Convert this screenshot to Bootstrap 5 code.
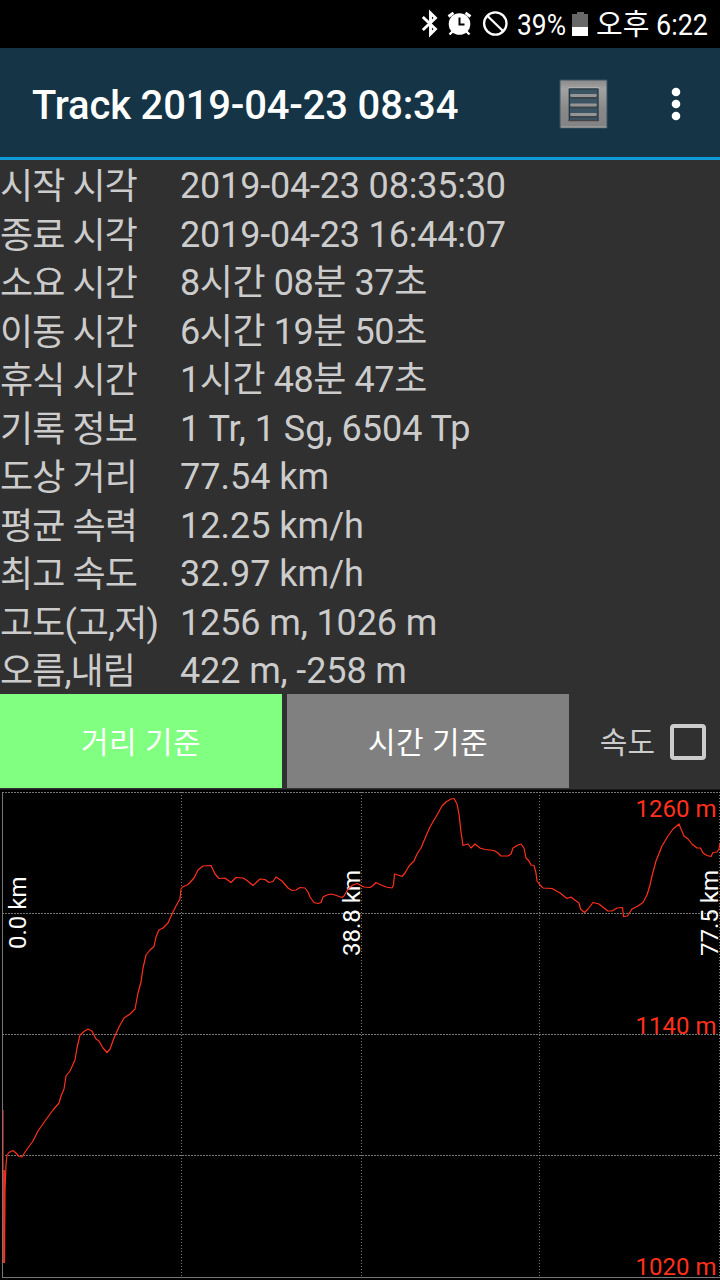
<!DOCTYPE html>
<html lang="ko">
<head>
<meta charset="utf-8">
<meta name="viewport" content="width=device-width, initial-scale=1">
<title>Track 2019-04-23 08:34</title>
<link href="https://cdn.jsdelivr.net/npm/bootstrap@5.3.0/dist/css/bootstrap.min.css" rel="stylesheet">
<style>
body{background:#000;font-family:Roboto,"Noto Sans CJK KR",sans-serif;color:#ccc;width:720px;height:1280px;overflow:hidden}
svg{display:block;flex:none}
svg text{font-family:Roboto,"Noto Sans CJK KR",sans-serif}
.status{height:48px;background:#000}
.appbar{height:112px;background:#153446;border-bottom:3px solid #0f9bd7;padding:2px 32px 0 32px}
.appbar h1{font-size:40px;font-weight:500;color:#fff;letter-spacing:-.18px;padding-top:4px}
.panel{background:#303030}
.info{height:533.5px;padding-top:2px}
.info-row{height:48.5px;font-size:36px;line-height:48.5px;white-space:nowrap}
.info-row dt{width:180px;font-weight:400;letter-spacing:-.9px;padding-top:1px}
.info-row dd{font-weight:400}
.info-row .date{letter-spacing:-.19px}
.info-row .span{letter-spacing:-.42px}
.info-row .pair{letter-spacing:-.12px}
.bar{height:96.5px;padding:0 0 1px;border-bottom:1px solid #1b1b1b}
.tab{border-radius:0;border:0;width:282px;font-size:30px;color:#fff;background:#808080;padding:4px 0 0;letter-spacing:.4px}
.tab.on{background:#80ff80;color:#fff}
.tick-label{font-size:30px;padding-top:4px}
.tick{width:36px;height:36px;margin:3px 0 0 15px;border:4px solid #ccc;border-radius:4px;background:transparent}
.grid line{stroke:#777;stroke-width:1}
</style>
</head>
<body>
<header class="status">
<svg width="720" height="48" viewBox="0 0 720 48" fill="none" stroke="#fff">
<path d="M422.800 17 435.500 29 430.500 34V13L435.500 18 422.800 30" stroke-width="2.900" stroke-linejoin="miter"/>
<circle cx="459.500" cy="24" r="10.800" fill="#fff" stroke="none"/>
<path d="M448.500 16.500 453.500 12.800M465.500 12.800 470.500 16.500" stroke-width="2.8"/>
<path d="M452.500 31.500 449.500 34.500M466.500 31.500 469.500 34.500" stroke-width="2.4"/>
<path d="M459.500 17.500V24.500H464.500" stroke="#000" stroke-width="2"/>
<circle cx="495.300" cy="23.500" r="11.200" stroke-width="2.3"/>
<path d="M487 15.500 503.500 31.500" stroke-width="2.3"/>
<path d="M572 14h5v-2h7v2h4v13h-16z" fill="#686868" stroke="none"/>
<path d="M572 27h16v9h-16z" fill="#fff" stroke="none"/>
<g fill="#fff" stroke="none" font-size="30">
<text x="517" y="35" textLength="49" lengthAdjust="spacingAndGlyphs">39%</text>
<text x="596" y="35" font-size="29">오후</text>
<text x="656" y="35" textLength="52" lengthAdjust="spacingAndGlyphs">6:22</text>
</g>
</svg>
</header>
<nav class="appbar d-flex align-items-center">
<h1 class="m-0 me-auto">Track 2019-04-23 08:34</h1>
<svg width="52" height="52" viewBox="0 0 52 52">
<defs>
<linearGradient id="metal" x2="0" y2="1"><stop stop-color="#8b8b8b"/><stop offset=".18" stop-color="#a2a2a2"/><stop offset=".6" stop-color="#898989"/><stop offset="1" stop-color="#838383"/></linearGradient>
</defs>
<rect x="1.500" y="1.500" width="48" height="49" rx="1" fill="#5b707b" opacity=".55"/>
<path fill-rule="evenodd" fill="url(#metal)" d="M2.500 2.500H48.500V49.500H2.500zM10.500 10.500V42.500H40.500V10.500z"/>
<path d="M3 49H48.500" stroke="#aaa"/>
<path d="M10.500 9.500H41" stroke="#b0b0b0"/>
<path d="M11.500 42V11H40V42" fill="none" stroke="#26373f"/>
<path d="M10.500 42.500H41" stroke="#444" stroke-width="1.500"/>
<path d="M12.500 19H38.500M12.500 28.500H38.500M12.500 38H38.500" stroke="#3b444a" stroke-width="4"/>
<path d="M13.500 17.500H37.500M13.500 27H37.500M13.500 36.500H37.500" stroke="#959595" stroke-width="2.800" stroke-linecap="round"/>
</svg>
<svg style="margin-left:50px" width="28" height="40" viewBox="0 0 28 40" fill="#fff"><circle cx="16" cy="8" r="4.300"/><circle cx="16" cy="20" r="4.300"/><circle cx="16" cy="32" r="4.300"/></svg>
</nav>
<main>
<dl class="panel info m-0">
<div class="info-row d-flex"><dt>시작 시각</dt><dd class="m-0 date">2019-04-23 08:35:30</dd></div>
<div class="info-row d-flex"><dt>종료 시각</dt><dd class="m-0 date">2019-04-23 16:44:07</dd></div>
<div class="info-row d-flex"><dt>소요 시간</dt><dd class="m-0 span">8시간 08분 37초</dd></div>
<div class="info-row d-flex"><dt>이동 시간</dt><dd class="m-0 span">6시간 19분 50초</dd></div>
<div class="info-row d-flex"><dt>휴식 시간</dt><dd class="m-0 span">1시간 48분 47초</dd></div>
<div class="info-row d-flex"><dt>기록 정보</dt><dd class="m-0">1 Tr, 1 Sg, 6504 Tp</dd></div>
<div class="info-row d-flex"><dt>도상 거리</dt><dd class="m-0">77.54 km</dd></div>
<div class="info-row d-flex"><dt>평균 속력</dt><dd class="m-0">12.25 km/h</dd></div>
<div class="info-row d-flex"><dt>최고 속도</dt><dd class="m-0">32.97 km/h</dd></div>
<div class="info-row d-flex"><dt>고도(고,저)</dt><dd class="m-0 pair">1256 m, 1026 m</dd></div>
<div class="info-row d-flex"><dt>오름,내림</dt><dd class="m-0 pair">422 m, -258 m</dd></div>
</dl>
<div class="panel bar d-flex">
<button class="btn tab on" type="button">거리 기준</button>
<button class="btn tab" type="button" style="margin-left:5px">시간 기준</button>
<div class="d-flex align-items-center ms-auto" style="padding-right:14px">
<label class="tick-label" for="speed">속도</label>
<input class="form-check-input tick" type="checkbox" id="speed">
</div>
</div>
<svg width="720" height="490" viewBox="0 790 720 490">
<g class="grid">
<g stroke-dasharray="2 1"><line x1="2" x2="720" y1="792.500" y2="792.500"/><line x1="2" x2="720" y1="913.500" y2="913.500"/><line x1="2" x2="720" y1="1034.500" y2="1034.500"/><line x1="2" x2="720" y1="1155.500" y2="1155.500"/></g>
<g stroke-dasharray="1 2"><line x1="181.500" x2="181.500" y1="792" y2="1277"/><line x1="361.500" x2="361.500" y1="792" y2="1277"/><line x1="539.500" x2="539.500" y1="792" y2="1277"/><line x1="719.500" x2="719.500" y1="792" y2="1277"/></g>
<line x1="2.500" x2="2.500" y1="792" y2="1277"/><line x1="2" x2="720" y1="1277.500" y2="1277.500"/>
</g>
<g fill="#fff" font-size="24">
<text transform="translate(26 949) rotate(-90)">0.0 km</text>
<text transform="translate(359.500 956) rotate(-90)">38.8 km</text>
<text transform="translate(717.500 956) rotate(-90)">77.5 km</text>
</g>
<g fill="#ff301c" font-size="24" text-anchor="end">
<text x="716.500" y="817">1260 m</text><text x="716.500" y="1033.500">1140 m</text><text x="716.500" y="1275">1020 m</text>
</g>
<path d="M3.500 1110V1170" stroke="#a01008" fill="none"/>
<path d="M4 1170V1263" stroke="#ff301c" stroke-width="1.800" fill="none"/>
<path fill="none" stroke="#ff301c" stroke-width="1.200" stroke-linejoin="round" d="M4.500 1263 5 1190 6 1165 7 1155 9 1152.500 13 1150.500 16 1153 19 1156.500 22 1157 25 1152 33 1141 38 1131 45 1121 53 1110 59 1103 61 1096 64 1089 66 1076 70 1071 75 1060 77 1048 80 1035 84 1031.500 88 1029 92 1031 94 1035 96 1039 99 1041 103 1048 107 1052.500 110 1049 114 1038 119 1027 124 1018 130 1014 135 1009 136.500 1001 138 993 141 982 143 968 146 955 150 950 154 946.500 156 937 159 930 163 928 168 923 172 914 176 906 180 899 181 889 182.500 887 188 884.500 194 878 198 870 203 866 211 865.500 215 874 219 878.500 225 878 231 882.500 236 877.500 243 878 247 880.500 253 885.500 260 879 265 879.500 269 882.500 273 881.500 276 877 282 881 288 888 292 890.500 296 890 300 887.500 305 888 308 892 310 897 314 902.500 318 903.500 321 902.500 323 897 327 895 331 894 335 895 342 897.500 344 896 348 889 353 885 357 883.500 360 885 364 887 370 887.500 373 885.500 376 882.500 380 884.500 386 887 392 888 393.500 885 394.500 874 398 875 402 876.500 405 873 409 866 414 861 417 854 421 848 426 836 430 827 437 815 442 806 446 802 451 799 454 798.500 457 804 459 814 461 832 463 845.500 466 844.500 468 844 471 848 475 844 480 848 485 849.500 494 850.500 498 853 501 856 508 856 511 854 513 848 518 845 521 844 524 848 526 858 529 861 531 865 534 865.500 536 873 537 881 540 885 543 888 552 888.500 560 893 567 898.500 571 897 574 899.500 579 903 580.500 909 584.500 912.500 588 909 593 902.500 599 904 604 908 608 911 612 911 617 908 622.500 907.500 623.500 916.500 627.500 916 632 909 638 906 643 902.500 647 895 650 885 652 876 656 861 662 846 668 836 673 829 679 824 681 829 684 836 688 839 692 844 697 848 700.500 848 703 853 707 855.500 711 856.500 713 852.500 717 852 719 849 720 843"/>
</svg>
</main>
<script src="https://cdn.jsdelivr.net/npm/bootstrap@5.3.0/dist/js/bootstrap.bundle.min.js"></script>
</body>
</html>
